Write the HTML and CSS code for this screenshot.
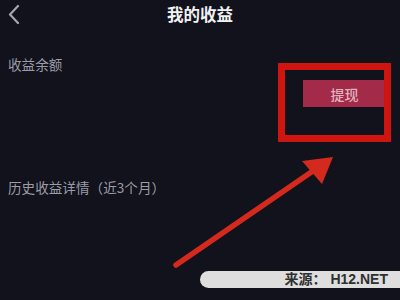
FILE: index.html
```html
<!DOCTYPE html>
<html lang="zh-CN">
<head>
<meta charset="utf-8">
<link rel="stylesheet" href="styles.css">
</head>
<body>
<div class="page">
  <header class="header">
    <svg class="back" width="14" height="20" viewBox="0 0 14 20"><path d="M11 2 L3 10.5 L11 19" fill="none" stroke="#a4a4b2" stroke-width="2.2" stroke-linecap="round" stroke-linejoin="round"/></svg>
    <h1 class="title">我的收益</h1>
  </header>
  <section class="balance">
    <div class="label">收益余额</div>
    <button class="withdraw">提现</button>
  </section>
  <section class="history">
    <div class="label">历史收益详情（近3个月）</div>
  </section>
  <div class="highlight"></div>
  <svg class="arrow" width="400" height="300" viewBox="0 0 400 300">
    <line x1="176" y1="265" x2="326" y2="162" stroke="#d42a1e" stroke-width="5.5" stroke-linecap="round"/>
    <polygon points="333,157 302,161 322,184" fill="#d42a1e"/>
  </svg>
  <div class="watermark">来源：&nbsp;H12.NET</div>
</div>
</body>
</html>
```
FILE: styles.css
```css
html, body {
  margin: 0;
  padding: 0;
  background: #11121c;
}
.page {
  position: relative;
  width: 400px;
  height: 300px;
  overflow: hidden;
  font-family: "Noto Sans CJK SC", "Noto Sans", sans-serif;
}
.header {
  position: relative;
  height: 30px;
  display: flex;
  align-items: center;
  justify-content: center;
}
.back {
  position: absolute;
  left: 7px;
  top: 4px;
}
.title {
  margin: 0;
  font-size: 16.5px;
  font-weight: 700;
  color: #f2f2f4;
  line-height: 20px;
  margin-top: -3px;
}
.balance {
  display: flex;
  flex-direction: column;
  padding: 26px 14px 0 8px;
}
.label {
  font-size: 13.6px;
  line-height: 16px;
  color: #9c9ca8;
}
.withdraw {
  align-self: flex-end;
  margin-top: 8px;
  width: 83px;
  height: 27px;
  border: none;
  padding: 0;
  background: #a42a4a;
  color: #dcb4be;
  font-family: inherit;
  font-size: 14px;
  font-weight: 500;
}
.history {
  padding: 72px 8px 0 8px;
}
.highlight {
  position: absolute;
  left: 278px;
  top: 63px;
  width: 99px;
  height: 65px;
  border: 7px solid #d01410;
}
.arrow {
  position: absolute;
  left: 0;
  top: 0;
}
.watermark {
  position: absolute;
  left: 200px;
  top: 271px;
  width: 188px;
  height: 17px;
  padding-right: 12px;
  background: #dedede;
  border-radius: 9px 0 0 9px;
  color: #303030;
  font-family: "Liberation Sans", "Noto Sans CJK SC", sans-serif;
  font-weight: 700;
  font-size: 14px;
  line-height: 17px;
  text-align: right;
}
```
